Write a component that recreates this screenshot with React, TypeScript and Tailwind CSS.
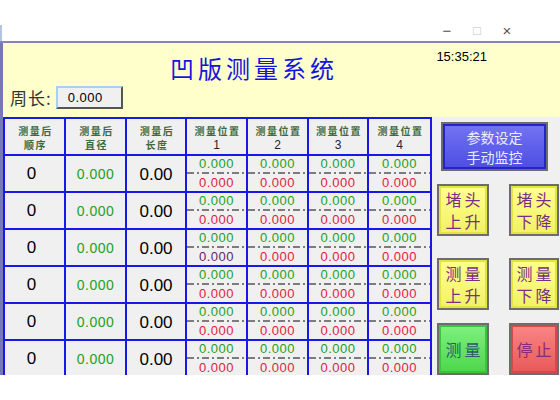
import React from "react";

const cjk = "font-['Noto_Sans_CJK_SC',sans-serif]";
const sans = "font-['Liberation_Sans',Arial,sans-serif]";

const headers = [
  ["测量后", "顺序"],
  ["测量后", "直径"],
  ["测量后", "长度"],
  ["测量位置", "1"],
  ["测量位置", "2"],
  ["测量位置", "3"],
  ["测量位置", "4"],
];

const rows = [0, 1, 2, 3, 4, 5];

function DashDot() {
  return (
    <svg width="100%" height="2" className="block shrink-0">
      <line x1="0" y1="1" x2="100%" y2="1" stroke="#7c7c7c" strokeWidth="2" strokeDasharray="7 3 2 3" />
    </svg>
  );
}

function PosCell({ bottomColor = "text-[#e2203e]" }: { bottomColor?: string }) {
  return (
    <div className={`bg-[#f0f0f0] flex flex-col items-center ${sans} text-[13px] tracking-[0.5px]`}>
      <div className="h-[16px] leading-[16px] text-[#22a022]">0.000</div>
      <DashDot />
      <div className={`h-[17px] leading-[17px] ${bottomColor}`}>0.000</div>
    </div>
  );
}

function ActionButton({
  lines,
  w,
  border,
  fill,
  text,
}: {
  lines: string[];
  w: string;
  border: string;
  fill: string;
  text: string;
}) {
  return (
    <div className={`${w} h-[52px] bg-[#6c6c6c] p-[2px]`}>
      <div
        className={`w-full h-full border-2 ${border} ${fill} flex flex-col items-center justify-center ${text} ${cjk} text-[16px] leading-[22px] whitespace-nowrap`}
      >
        {lines.map((l) => (
          <span key={l} className="block h-[22px] tracking-[3px] pl-[3px]">{l}</span>
        ))}
      </div>
    </div>
  );
}

const yellow = {
  border: "border-[#e4e440]",
  fill: "bg-gradient-to-b from-[#ffff8c] to-[#f2f266]",
  text: "text-[#7b2d86]",
};

export default function App() {
  return (
    <div className="w-[560px] h-[400px] bg-white overflow-hidden flex flex-col">
      {/* barra de título da janela */}
      <div className="h-[41px] flex items-end">
        <div className="w-[2px] h-[16px] bg-[#b4c4dc]" />
        <div className={`ml-auto mr-[38px] mb-[1px] flex text-[#555] text-[15px] leading-[18px] ${sans}`}>
          <span className="w-[30px] text-center">−</span>
          <span className="w-[30px] text-center text-[#c4c4c4] text-[13px]">□</span>
          <span className="w-[30px] text-center">×</span>
        </div>
      </div>
      <div className="h-[2px] bg-[#8584b4]" />

      <div className="h-[332px] flex">
        <div className="w-[3px] bg-[#7878b8]" />
        <div className="flex-1 flex flex-col">
          {/* cabeçalho amarelo */}
          <div className="h-[74px] bg-[#ffffcc] flex flex-col">
            <div className="h-[40px] flex">
              <div className={`ml-[167px] mt-[11px] text-[24px] leading-[28px] tracking-[4px] text-[#1414e0] ${cjk}`}>
                凹版测量系统
              </div>
              <div className={`ml-auto mr-[73px] mt-[4px] text-[13px] text-black ${sans}`}>15:35:21</div>
            </div>
            <div className="flex items-center pl-[7px] mt-[3px]">
              <span className={`text-[17px] leading-[22px] text-[#333] tracking-[1px] ${cjk}`}>周长:</span>
              <div className="ml-[4px] w-[67px] h-[23px] bg-[#f0f0f0] border-2 border-t-[#a8cff0] border-l-[#a8cff0] border-r-[#555] border-b-[#555] flex items-center pl-[10px]">
                <span className={`text-[13px] tracking-[0.5px] text-black ${sans}`}>0.000</span>
              </div>
            </div>
          </div>

          <div className="flex h-[258px]">
            {/* tabela */}
            <div className="bg-[#1818e8] p-[2px] pb-0 grid grid-cols-[59px_59px_58px_59px_59px_58px_61px] auto-rows-[35px] gap-[2px] overflow-hidden">
              {headers.map(([a, b], i) => (
                <div
                  key={i}
                  className={`bg-[#f0f0f0] flex flex-col items-center justify-center pt-[2px] text-[10px] leading-[13px] ${cjk}`}
                >
                  <span className="block h-[13px] tracking-[1.5px] pl-[2px] text-[#3d6b3d] font-semibold">{a}</span>
                  {i < 3 ? (
                    <span className="block mt-[1px] h-[13px] tracking-[1.5px] pl-[2px] text-[#3d6b3d] font-semibold">{b}</span>
                  ) : (
                    <span className={`block mt-[2px] h-[12px] text-[12px] leading-[12px] text-[#223] ${sans}`}>{b}</span>
                  )}
                </div>
              ))}
              {rows.map((r) => (
                <React.Fragment key={r}>
                  <div className={`bg-[#f0f0f0] flex items-center justify-center pr-[6px] text-[17px] text-black ${sans}`}>0</div>
                  <div className={`bg-[#f0f0f0] flex items-center justify-center pt-[1px] text-[14px] tracking-[0.5px] text-[#22a022] ${sans}`}>0.000</div>
                  <div className={`bg-[#f0f0f0] flex items-center justify-center pt-[2px] text-[17px] text-black ${sans}`}>0.00</div>
                  <PosCell bottomColor={r === 2 ? "text-[#5a2a6a]" : "text-[#e2203e]"} />
                  <PosCell />
                  <PosCell />
                  <PosCell />
                </React.Fragment>
              ))}
            </div>

            {/* painel de botões */}
            <div className="flex-1 bg-[#f0f0f0] flex flex-col pt-[5px]">
              <div className="ml-[9px] w-[107px] h-[51px] bg-[#6c6c6c] p-[2px]">
                <div className={`w-full h-full border-2 border-[#2424c8] bg-gradient-to-b from-[#7272f2] to-[#4e4ee2] flex flex-col items-center justify-center text-[#ececff] text-[14px] leading-[20px] ${cjk}`}>
                  <span className="block h-[20px]">参数设定</span>
                  <span className="block h-[20px]">手动监控</span>
                </div>
              </div>
              <div className="mt-[13px] flex pl-[5px] gap-[20px]">
                <ActionButton lines={["堵头", "上升"]} w="w-[52px]" {...yellow} />
                <ActionButton lines={["堵头", "下降"]} w="w-[50px]" {...yellow} />
              </div>
              <div className="mt-[22px] flex pl-[5px] gap-[20px]">
                <ActionButton lines={["测量", "上升"]} w="w-[52px]" {...yellow} />
                <ActionButton lines={["测量", "下降"]} w="w-[50px]" {...yellow} />
              </div>
              <div className="mt-[13px] flex pl-[5px] gap-[20px]">
                <ActionButton lines={["测量"]} w="w-[52px]" border="border-[#3cc43c]" fill="bg-gradient-to-b from-[#7cf07c] to-[#4cd84c]" text="text-[#2f5a6a]" />
                <ActionButton lines={["停止"]} w="w-[50px]" border="border-[#d84848]" fill="bg-gradient-to-b from-[#f88484] to-[#e85a5a]" text="text-[#8a2a7a]" />
              </div>
            </div>
          </div>
        </div>
      </div>
    </div>
  );
}
